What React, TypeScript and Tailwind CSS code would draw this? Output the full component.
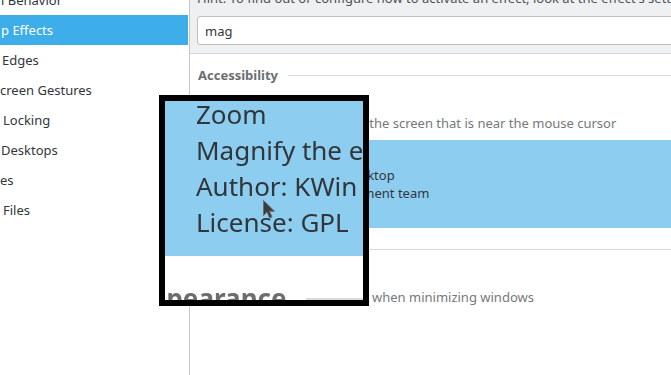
import React from 'react';

const sidebarItems = [
  { label: 'l Behavior', cls: 'pl-[1px]' },
  { label: 'p Effects', cls: 'pl-[1px] bg-[#3daee9] text-white', selected: true },
  { label: 'Edges', cls: 'pl-[2px]' },
  { label: 'creen Gestures', cls: 'pl-0' },
  { label: 'Locking', cls: 'pl-[3px]' },
  { label: 'Desktops', cls: 'pl-[1px]' },
  { label: 'es', cls: 'pl-0' },
  { label: 'Files', cls: 'pl-[3px]' },
];

type Effect = {
  title: string;
  lines: string[];
  selected?: boolean;
};

const SectionHeader: React.FC<{ title: string }> = ({ title }) => (
  <div className="flex items-center gap-[10px] pt-[12px] pb-[4px] pl-[8px]">
    <span className="font-bold text-[#6b6e71]">{title}</span>
    <div className="h-px flex-1 bg-[#d9dadb]" />
  </div>
);

const EffectRow: React.FC<{ effect: Effect }> = ({ effect }) => (
  <div className={`flex py-[8px] pl-[7px] ${effect.selected ? 'bg-[#8dcdf0]' : ''}`}>
    <div className="mt-px h-[16px] w-[16px] shrink-0 rounded-[3px] border border-[#a7aaad] bg-white" />
    <div className="ml-[17px] min-w-0 whitespace-nowrap">
      <div className="text-[#31363b]">{effect.title}</div>
      {effect.lines.map((l) => (
        <div key={l} className={effect.selected ? 'text-[#31363b]' : 'text-[#75797d]'}>
          {l}
        </div>
      ))}
    </div>
  </div>
);

const Page: React.FC = () => (
  <div className="flex h-[375px] w-[671px] overflow-hidden bg-white font-['Noto_Sans',sans-serif] text-[13px] leading-[18px] text-[#31363b]">
    <aside className="w-[190px] shrink-0 overflow-hidden border-r border-[#c4c6c8] bg-white">
      <ul className="-mt-[15px]">
        {sidebarItems.map((item) => (
          <li key={item.label} className={`mr-px flex h-[30px] items-center whitespace-nowrap ${item.cls}`}>
            {item.label}
          </li>
        ))}
      </ul>
    </aside>

    <main className="flex min-w-0 flex-1 flex-col overflow-hidden">
      <div className="flex h-[54px] shrink-0 flex-col border-b border-[#d6d7d8] bg-[#eff0f1] pl-[7px]">
        <p className="-mt-[11px] whitespace-nowrap text-[#4d5257]">
          Hint: To find out or configure how to activate an effect, look at the effect's settings.
        </p>
        <div className="mt-[9px] flex h-[29px] w-[520px] shrink-0 items-center rounded-[3px] border border-[#bcbebf] bg-white pl-[7px]">
          mag
        </div>
      </div>

      <SectionHeader title="Accessibility" />
      <EffectRow
        effect={{
          title: 'Magnifier',
          lines: ['Magnify the section of the screen that is near the mouse cursor'],
        }}
      />
      <EffectRow
        effect={{
          title: 'Zoom',
          lines: ['Magnify the entire desktop', 'Author: KWin development team', 'License: GPL'],
          selected: true,
        }}
      />

      <SectionHeader title="Appearance" />
      <EffectRow
        effect={{
          title: 'Magic Lamp',
          lines: ['Simulate a magic lamp when minimizing windows'],
        }}
      />
    </main>
  </div>
);

export default function App() {
  return (
    <div className="relative h-[375px] w-[671px] overflow-hidden bg-white">
      <Page />

      {/* magnifier lens */}
      <div className="absolute left-[159px] top-[95px] h-[211px] w-[210px] overflow-hidden border-[6px] border-black bg-white">
        <div className="absolute left-[-429px] top-[-301px] origin-top-left scale-200 blur-[0.35px]">
          <Page />
        </div>
      </div>

      {/* mouse cursor */}
      <svg className="absolute left-[262px] top-[199px]" width="14" height="22" viewBox="0 0 14 22">
        <path
          d="M1.5 1.5 L1.5 16.5 L5 13 L7.6 19 L10 18 L7.5 12.2 L12.5 12.2 Z"
          fill="#3b3c3d"
          stroke="#6a6c6e"
          strokeWidth="1"
          strokeLinejoin="round"
        />
      </svg>
    </div>
  );
}
